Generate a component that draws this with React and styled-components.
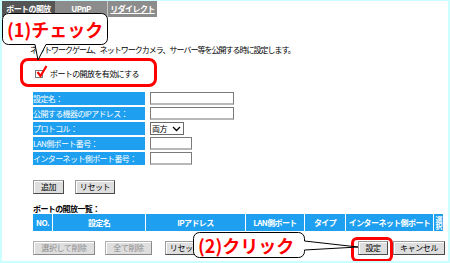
import React from "react";
import styled, { createGlobalStyle } from "styled-components";

const GlobalStyle = createGlobalStyle`
  html, body { margin: 0; padding: 0; background: #fff; }
  body { font-family: "Noto Sans CJK JP", "Noto Sans", sans-serif; }
`;

const BLUE = "#1e9ff0";
const RED = "#ff0000";

function App() {
  return (
    <>
      <GlobalStyle />
      <Frame>
        <TabBar>
          <Tab $w={53} $active>ポートの開放</Tab>
          <Tab $w={52} $divider>UPnP</Tab>
          <Tab $w={49}>リダイレクト</Tab>
        </TabBar>

        <Content>
          <Description>
            ネットワークゲーム、ネットワークカメラ、サーバー等を公開する時に設定します。
          </Description>

          <CheckRow>
            <CheckBox>
              <svg width="12" height="14" viewBox="0 0 12 14">
                <path d="M1.5 7 L4.5 11 L10.5 1" fill="none" stroke={RED} strokeWidth="2.2" />
              </svg>
            </CheckBox>
            <span>ポートの開放を有効にする</span>
          </CheckRow>

          <FormTable>
            <FieldLabel>設定名：</FieldLabel>
            <TextBox $w={84} />
            <FieldLabel>公開する機器のIPアドレス：</FieldLabel>
            <TextBox $w={84} />
            <FieldLabel>プロトコル：</FieldLabel>
            <Select>
              <span>両方</span>
              <svg width="9" height="6" viewBox="0 0 9 6">
                <path d="M1 1 L4.5 4.5 L8 1" fill="none" stroke="#000" strokeWidth="1.3" />
              </svg>
            </Select>
            <FieldLabel>LAN側ポート番号：</FieldLabel>
            <TextBox $w={42} />
            <FieldLabel>インターネット側ポート番号：</FieldLabel>
            <TextBox $w={42} />
          </FormTable>

          <ButtonRow>
            <Button $w={31}>追加</Button>
            <Button $w={40}>リセット</Button>
          </ButtonRow>

          <ListTitle>ポートの開放一覧：</ListTitle>
          <ListHeader>
            <HeadCell>NO.</HeadCell>
            <HeadCell>設定名</HeadCell>
            <HeadCell>IPアドレス</HeadCell>
            <HeadCell>LAN側ポート</HeadCell>
            <HeadCell>タイプ</HeadCell>
            <HeadCell>インターネット側ポート</HeadCell>
            <HeadCell $stack>選択</HeadCell>
          </ListHeader>

          <ActionRow>
            <Group $gap={10}>
              <Button $w={62} disabled>選択して削除</Button>
              <Button $w={47} disabled>全て削除</Button>
              <Button $w={40} $ml={3}>リセット</Button>
            </Group>
            <Group $gap={5}>
              <Button $w={30}>設定</Button>
              <Button $w={52}>キャンセル</Button>
            </Group>
          </ActionRow>
        </Content>

        <Highlight $x={18} $y={57} $w={137} $h={29} $r={8} />
        <Highlight $x={349} $y={236} $w={42} $h={25} $r={6} />

        <Callout $x={0} $y={12} $w={107} $h={48}>
          <svg width="107" height="48" viewBox="0 0 107 48">
            <path
              d="M6.5 0.5 H99.5 A6 6 0 0 1 105.5 6.5 V25.5 A6 6 0 0 1 99.5 31.5 H44 L36 47 L33 31.5 H6.5 A6 6 0 0 1 0.5 25.5 V6.5 A6 6 0 0 1 6.5 0.5 Z"
              fill="#fff"
              stroke="#000"
              strokeWidth="1"
            />
          </svg>
          <CalloutText $x={5} $y={4}>(1)チェック</CalloutText>
        </Callout>

        <Callout $x={191} $y={230} $w={166} $h={29}>
          <svg width="166" height="29" viewBox="0 0 166 29">
            <path
              d="M6.5 1.5 H105.5 A6 6 0 0 1 111.5 7.5 V10 L165 16 L111.5 19 V20.5 A6 6 0 0 1 105.5 26.5 H6.5 A6 6 0 0 1 0.5 20.5 V7.5 A6 6 0 0 1 6.5 1.5 Z"
              fill="#fff"
              stroke="#000"
              strokeWidth="1"
            />
          </svg>
          <CalloutText $x={5} $y={2}>(2)クリック</CalloutText>
        </Callout>
      </Frame>
    </>
  );
}

const Frame = styled.div`
  position: relative;
  width: 450px;
  height: 263px;
  box-sizing: border-box;
  border: 2px solid #ccffff;
  border-top-width: 1px;
  background: #fff;
  overflow: hidden;
  font-size: 8px;
  letter-spacing: -0.6px;
  color: #000;
`;

const TabBar = styled.div`
  display: flex;
  height: 16px;
`;

const Tab = styled.div`
  width: ${(p) => p.$w}px;
  background: ${(p) => (p.$active ? "#555555" : "#8c8c8c")};
  border-right: ${(p) => (p.$divider ? "1px solid #c8c8c8" : "none")};
  color: #fff;
  font-weight: bold;
  text-decoration: underline;
  display: flex;
  align-items: center;
  justify-content: center;
  line-height: 1;
`;

const Content = styled.div`
  padding-left: 31px;
`;

const Description = styled.div`
  margin: 28px 0 0 -3px;
  line-height: 10px;
  letter-spacing: -1px;
  white-space: nowrap;
`;

const CheckRow = styled.div`
  margin-top: 3px;
  height: 30px;
  display: flex;
  align-items: center;
  gap: 7px;
  padding-left: 2px;
`;

const CheckBox = styled.span`
  position: relative;
  width: 8px;
  height: 8px;
  border: 1px solid #7a7a7a;
  background: #fff;
  box-sizing: border-box;
  margin-top: 1px;
  svg {
    position: absolute;
    left: 0px;
    top: -6px;
    overflow: visible;
  }
`;

const FormTable = styled.div`
  margin-top: 4px;
  display: grid;
  grid-template-columns: 112px auto;
  grid-auto-rows: 13px;
  column-gap: 5px;
  row-gap: 2px;
  justify-items: start;
`;

const FieldLabel = styled.div`
  width: 112px;
  background: ${BLUE};
  color: #fff;
  line-height: 13px;
  white-space: nowrap;
  overflow: hidden;
`;

const TextBox = styled.div`
  width: ${(p) => p.$w}px;
  height: 13px;
  box-sizing: border-box;
  border: 1px solid #7a7a7a;
  border-bottom: 2px solid #b8b8b8;
  background: #fff;
`;

const Select = styled.div`
  width: 34px;
  height: 13px;
  box-sizing: border-box;
  border: 1px solid #6a6a6a;
  display: flex;
  align-items: center;
  justify-content: space-between;
  padding: 0 2px 0 1px;
  line-height: 1;
`;

const ButtonRow = styled.div`
  margin-top: 15px;
  display: flex;
  gap: 11px;
`;

const Button = styled.button`
  width: ${(p) => p.$w}px;
  height: 14px;
  margin-left: ${(p) => p.$ml || 0}px;
  padding: 0;
  box-sizing: border-box;
  font-family: inherit;
  font-size: 8px;
  letter-spacing: -0.4px;
  line-height: 1;
  background: #dedede;
  color: #000;
  border: 1px solid #9a9a9a;
  border-right-color: #4a4a4a;
  border-bottom-color: #4a4a4a;
  box-shadow: inset 1px 1px 0 #fff;
  &:disabled {
    color: #8c8c8c;
    border-color: #b0b0b0;
    border-right-color: #8a8a8a;
    border-bottom-color: #8a8a8a;
  }
`;

const ListTitle = styled.div`
  margin-top: 9px;
  line-height: 11px;
  font-weight: bold;
`;

const ListHeader = styled.div`
  display: grid;
  grid-template-columns: 19px 92px 99px 58px 40px 87px 9px;
  column-gap: 1px;
  height: 17px;
`;

const HeadCell = styled.div`
  background: ${BLUE};
  color: #fff;
  font-weight: bold;
  font-size: ${(p) => (p.$stack ? "7px" : "8px")};
  writing-mode: ${(p) => (p.$stack ? "vertical-rl" : "horizontal-tb")};
  letter-spacing: ${(p) => (p.$stack ? "0" : "-0.6px")};
  display: flex;
  align-items: center;
  justify-content: center;
  line-height: 1;
  white-space: nowrap;
  overflow: hidden;
`;

const ActionRow = styled.div`
  margin-top: 10px;
  width: 412px;
  display: flex;
  justify-content: space-between;
`;

const Group = styled.div`
  display: flex;
  gap: ${(p) => p.$gap}px;
`;

const Highlight = styled.div`
  position: absolute;
  left: ${(p) => p.$x}px;
  top: ${(p) => p.$y}px;
  width: ${(p) => p.$w}px;
  height: ${(p) => p.$h}px;
  box-sizing: border-box;
  border: 3px solid ${RED};
  border-radius: ${(p) => p.$r}px;
`;

const Callout = styled.div`
  position: absolute;
  left: ${(p) => p.$x}px;
  top: ${(p) => p.$y}px;
  width: ${(p) => p.$w}px;
  height: ${(p) => p.$h}px;
  svg {
    position: absolute;
    left: 0;
    top: 0;
  }
`;

const CalloutText = styled.div`
  position: absolute;
  left: ${(p) => p.$x}px;
  top: ${(p) => p.$y}px;
  color: ${RED};
  font-size: 18px;
  font-weight: bold;
  letter-spacing: 0;
  line-height: 24px;
  white-space: nowrap;
`;

export default App;
